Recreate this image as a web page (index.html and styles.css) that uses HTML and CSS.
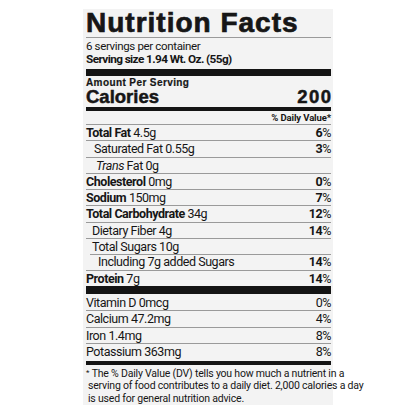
FILE: index.html
```html
<!DOCTYPE html>
<html lang="en">
<head>
<meta charset="utf-8">
<title>Nutrition Facts</title>
<link rel="stylesheet" href="styles.css">
</head>
<body>
<div class="label">
  <h1 class="title">Nutrition Facts</h1>
  <p class="servings">6 servings per container</p>
  <p class="size">Serving size 1.94 Wt. Oz. (55g)</p>
  <div class="bar bar-thick"></div>
  <p class="amount">Amount Per Serving</p>
  <div class="calories"><span>Calories</span><span class="cal-num">200</span></div>
  <div class="bar bar-mid"></div>
  <div class="dv-head">% Daily Value*</div>
  <ul class="rows">
    <li class="row"><span><b>Total Fat</b> 4.5g</span><span><b>6</b>%</span></li>
    <li class="row ind1"><span>Saturated Fat 0.55g</span><span><b>3</b>%</span></li>
    <li class="row ind2"><span><i>Trans</i> Fat 0g</span><span></span></li>
    <li class="row"><span><b>Cholesterol</b> 0mg</span><span><b>0</b>%</span></li>
    <li class="row"><span><b>Sodium</b> 150mg</span><span><b>7</b>%</span></li>
    <li class="row"><span><b>Total Carbohydrate</b> 34g</span><span><b>12</b>%</span></li>
    <li class="row ind0"><span>Dietary Fiber 4g</span><span><b>14</b>%</span></li>
    <li class="row ind0 short"><span>Total Sugars 10g</span><span></span></li>
    <li class="row ind3"><span>Including 7g added Sugars</span><span><b>14</b>%</span></li>
    <li class="row last"><span><b>Protein</b> 7g</span><span><b>14</b>%</span></li>
  </ul>
  <div class="bar bar-thick2"></div>
  <ul class="rows vits">
    <li class="row"><span>Vitamin D 0mcg</span><span>0%</span></li>
    <li class="row"><span>Calcium 47.2mg</span><span>4%</span></li>
    <li class="row"><span>Iron 1.4mg</span><span>8%</span></li>
    <li class="row last"><span>Potassium 363mg</span><span>8%</span></li>
  </ul>
  <div class="bar bar-end"></div>
  <p class="foot"><span class="star">*</span> The % Daily Value (DV) tells you how much a nutrient in a<br>serving of food contributes to a daily diet. 2,000 calories a day<br>is used for general nutrition advice.</p>
</div>
</body>
</html>
```
FILE: styles.css
```css
html, body {
  margin: 0;
  padding: 0;
  background: #ffffff;
}

body {
  color: #161616;
  font-family: Roboto, "Liberation Sans", sans-serif;
}

.label {
  width: 245px;
  margin: 9px auto 0;
  padding: 0 2px 0 3px;
  background: #f3f3f3;
  box-sizing: content-box;
}

p, h1, ul {
  margin: 0;
  padding: 0;
}

.title {
  font-family: "Liberation Sans", Arial, sans-serif;
  font-weight: 900;
  font-size: 28px;
  line-height: 28px;
  letter-spacing: 1px;
  -webkit-text-stroke: 0.7px #161616;
  border-bottom: 1px solid #9a9a9a;
  white-space: nowrap;
}

.servings {
  margin-top: 2px;
  font-size: 11.5px;
  line-height: 12px;
  letter-spacing: -0.35px;
}

.size {
  margin-top: 1px;
  font-size: 11.8px;
  line-height: 12px;
  font-weight: 700;
  letter-spacing: -0.6px;
}

.bar {
  background: #141414;
}

.bar-thick {
  margin-top: 4px;
  height: 7px;
}

.amount {
  margin-top: 2px;
  font-family: "Liberation Sans", Arial, sans-serif;
  font-weight: 700;
  font-size: 10px;
  line-height: 9px;
  height: 9px;
  letter-spacing: 0.4px;
  -webkit-text-stroke: 0.2px #161616;
}

.calories {
  display: flex;
  justify-content: space-between;
  margin-top: 1px;
  font-family: "Liberation Sans", Arial, sans-serif;
  font-weight: 700;
  font-size: 18.5px;
  line-height: 18px;
  -webkit-text-stroke: 0.5px #161616;
}

.cal-num {
  letter-spacing: 1.5px;
  margin-right: -1.5px;
}

.bar-mid {
  margin-top: 1px;
  height: 4px;
}

.dv-head {
  text-align: right;
  font-size: 9.5px;
  font-weight: 700;
  line-height: 13px;
  letter-spacing: -0.1px;
  border-bottom: 1px solid #9a9a9a;
}

.rows {
  list-style: none;
}

.row {
  display: flex;
  justify-content: space-between;
  height: 15.3px;
  font-size: 12.5px;
  line-height: 15.3px;
  letter-spacing: -0.45px;
  border-bottom: 1px solid #9a9a9a;
  white-space: nowrap;
}

.row b {
  font-weight: 700;
}

.row.last {
  border-bottom: none;
}

.ind0 > span:first-child { padding-left: 6px; }
.ind1 > span:first-child { padding-left: 8px; }
.ind2 > span:first-child { padding-left: 10px; }
.ind3 > span:first-child { padding-left: 12px; }

.short {
  border-bottom: none;
  position: relative;
}

.short::after {
  content: "";
  position: absolute;
  left: 4px;
  right: 0;
  bottom: -1px;
  height: 1px;
  background: #9a9a9a;
}

.bar-thick2 {
  height: 8px;
}

.vits {
  padding-top: 1px;
}

.vits .row {
  height: 15.5px;
  line-height: 15.5px;
}

.bar-end {
  height: 4px;
  margin-top: 1px;
}

.foot {
  margin-top: 2px;
  padding-left: 2px;
  text-indent: -2px;
  font-size: 10.5px;
  line-height: 12.5px;
  letter-spacing: -0.2px;
  white-space: nowrap;
}

.star {
  font-size: 8px;
  vertical-align: 2px;
  letter-spacing: 0;
}
```
